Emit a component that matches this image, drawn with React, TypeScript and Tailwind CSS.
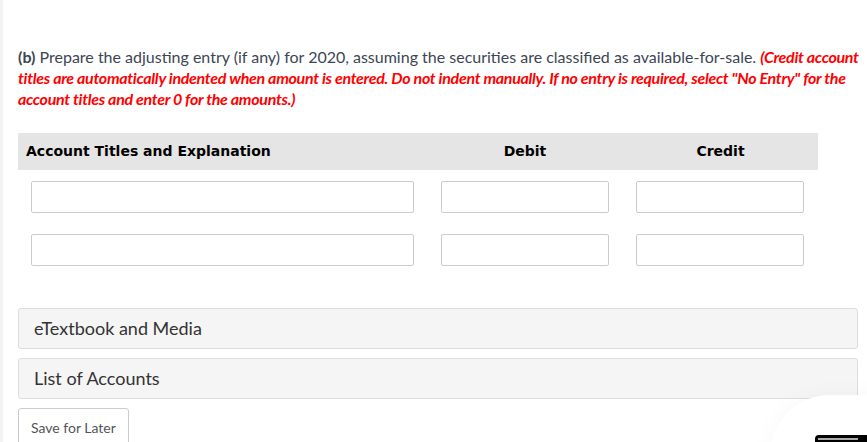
export default function App() {
  const rows = [0, 1];
  return (
    <div className="relative h-[442px] w-[867px] overflow-hidden bg-white font-['Lato',sans-serif]">
      <div className="absolute left-0 top-0 h-full w-[3px] bg-[#f3f3f3]" />
      <div className="pl-[18px] pr-[9px] pt-[46px]">
        <p className="-mr-[9px] text-[16px] leading-[21px] text-[#3c4654]">
          <b>(b)</b> Prepare the adjusting entry (if any) for 2020, assuming the securities are classified as
          available-for-sale.{" "}
          <span className="font-bold italic tracking-[-0.3px] text-[#ff0000]">
            (Credit account titles are automatically indented when amount is entered. Do not indent manually. If no
            entry is required, select "No Entry" for the account titles and enter 0 for the amounts.)
          </span>
        </p>

        <div className="mt-[24px] w-[800px]">
          <div className="grid h-[37px] grid-cols-[409px_196px_195px] items-center bg-[#e5e5e5] font-['DejaVu_Sans',Verdana,sans-serif] text-[14px] font-bold text-black">
            <div className="pl-[8px]">Account Titles and Explanation</div>
            <div className="text-center">Debit</div>
            <div className="text-center">Credit</div>
          </div>
          {rows.map((r) => (
            <div key={r} className="mt-[11px] grid grid-cols-[409px_196px_195px] pb-[10px]">
              <div className="pl-[13px] pr-[13px]">
                <input className="h-[32px] w-full rounded-[2px] border border-[#cccccc] bg-white outline-none" />
              </div>
              <div className="pl-[14px] pr-[14px]">
                <input className="h-[32px] w-full rounded-[2px] border border-[#cccccc] bg-white outline-none" />
              </div>
              <div className="pl-[13px] pr-[14px]">
                <input className="h-[32px] w-full rounded-[2px] border border-[#cccccc] bg-white outline-none" />
              </div>
            </div>
          ))}
        </div>

        <div className="mt-[32px] flex flex-col gap-[9px]">
          <div className="flex h-[41px] items-center rounded-[3px] border border-[#dddddd] bg-[#f5f5f5] pl-[15px] text-[18px] text-[#333333]">
            eTextbook and Media
          </div>
          <div className="flex h-[41px] items-center rounded-[3px] border border-[#dddddd] bg-[#f5f5f5] pl-[15px] text-[18px] text-[#333333]">
            List of Accounts
          </div>
        </div>

        <button className="mt-[9px] h-[40px] rounded-[3px] border border-[#cccccc] bg-white px-[12px] pb-[2px] text-[14px] text-[#555555]">
          Save for Later
        </button>
      </div>

      <div className="absolute left-[770px] top-[395px] h-[100px] w-[140px] rounded-tl-[60px] bg-white shadow-[0_0_24px_rgba(0,0,0,0.03)]" />
      <div className="absolute left-[815px] top-[435px] h-[20px] w-[60px] rounded-[4px] bg-black p-[3px]">
        <div className="h-[2px] w-[40px] bg-[#aaaaaa]" />
      </div>
    </div>
  );
}
